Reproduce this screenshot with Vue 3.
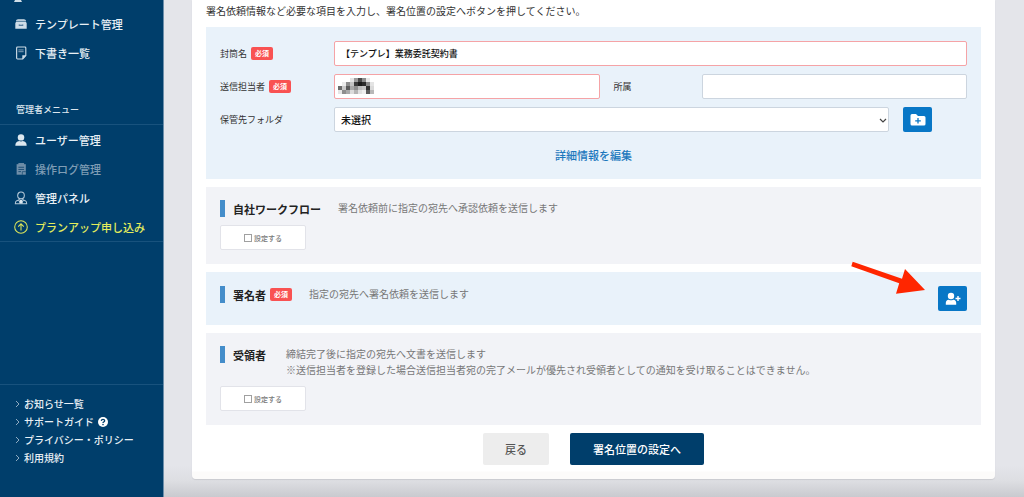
<script setup>
import { ref } from 'vue'

const envelope = ref('【テンプレ】業務委託契約書')
const sender = ref('')
const department = ref('')
const folder = ref('未選択')
const workflow = ref(false)
const receiver = ref(false)

const footerLinks = [
  { text: 'お知らせ一覧' },
  { text: 'サポートガイド', help: true },
  { text: 'プライバシー・ポリシー' },
  { text: '利用規約' },
]

const shades = [
  ['', '', '', '#e3e3e3', '#9a9a9a', '#4a4a4a', '#8e8e8e', '#e8e8e8', ''],
  ['', '#ececec', '#8c8c8c', '#c2c2c2', '#3a3a3a', '#1c1c1c', '#2c2c2c', '#8a8a8a', '#e4e4e4'],
  ['#6c6c6c', '#c9c9c9', '#5a5a5a', '#a8a8a8', '#8e8e8e', '#bdbdbd', '#c8c8c8', '#333333', '#dadada'],
  ['#e6e6e6', '#8e8e8e', '#a9a9a9', '#dcdcdc', '#b5b5b5', '#e2e2e2', '#f0f0f0', '#5c5c5c', '#b8b8b8'],
]
</script>

<template>
  <div class="page">
    <aside class="sidebar">
      <svg class="cut" viewBox="0 0 8 2"><path d="M1 0h6l1 2H0z" fill="#cfdde8" /></svg>
      <nav class="menu first">
        <a href="#">
          <svg viewBox="0 0 16 16"><path d="M4.500 2.500h7l2 1v1h-11v-1zM2.500 5h11l1 2v6.500h-13V7z" fill="#cfdde8" /><path d="M6 8.500v1h4v-1" fill="none" stroke="#335f85" stroke-width="1.200" /><path d="M3 4.700h10" stroke="#557f9f" stroke-width=".6" /></svg>
          テンプレート管理
        </a>
        <a href="#">
          <svg viewBox="0 0 16 16"><path d="M4 1.200h8.500q1 0 1 1V11l-3.500 3.800H4q-1 0-1-1V2.200q0-1 1-1z" fill="none" stroke="#cfdde8" stroke-width="1.300" /><path d="M9.500 15v-4.500H14z" fill="#cfdde8" /><path d="M5 4.500h6M5 6.500h6" stroke="#a5bccd" stroke-width=".9" /></svg>
          下書き一覧
        </a>
      </nav>
      <h2>管理者メニュー</h2>
      <nav class="menu second">
        <a href="#">
          <svg viewBox="0 0 16 16"><circle cx="8" cy="5" r="3.700" fill="#dce7ef" /><path d="M1.500 14.500q0-5 4.500-5.500l2 .7 2-.7q4.500 .5 4.500 5.500z" fill="#dce7ef" /></svg>
          ユーザー管理
        </a>
        <a href="#" class="dim">
          <svg viewBox="0 0 16 16"><path d="M3 2.500h10.500v12H3z" fill="#708fa9" /><path d="M5 1.200h6.500v2H5z" fill="#708fa9" /><path d="M5 6h6.500M5 8.500h6.500M5 11h3" stroke="#14476f" /><path d="M9.500 14.500v-3.500h4" fill="none" stroke="#14476f" stroke-width=".8" /></svg>
          操作ログ管理
        </a>
        <a href="#">
          <svg viewBox="0 0 16 16"><g fill="none" stroke="#b5c9d8" stroke-width="1.200"><circle cx="8" cy="5" r="3.800" /><path d="M6 8.500v1.500l-3.300 1.300q-1.200.7-1.200 3.200h13q0-2.500-1.200-3.200L10 10V8.500M5.500 10.500l1.500 3 1-2 1 2 1.500-3" /></g><path d="M7 10h2l.7 4H6.300z" fill="#dce7ef" /></svg>
          管理パネル
        </a>
        <a href="#" class="plan">
          <svg viewBox="0 0 16 16"><g fill="none" stroke="#dce65a" stroke-width="1.200"><circle cx="8" cy="8" r="7.200" /><path d="M8 12V4.500M4.800 7.500L8 4.300l3.200 3.200" /></g></svg>
          プランアップ申し込み
        </a>
      </nav>
      <nav class="links">
        <a v-for="link in footerLinks" :key="link.text" href="#">
          <svg class="caret" viewBox="0 0 5 8"><path d="M1 1l3 3-3 3" fill="none" stroke="#8fabc1" /></svg>
          {{ link.text }}
          <svg v-if="link.help" class="help" viewBox="0 0 10 10"><circle cx="5" cy="5" r="5" fill="#fff" /><path d="M3.300 3.900Q3.400 2.300 5 2.300T6.700 3.700Q6.700 4.500 5.800 4.900 5 5.200 5 6" fill="none" stroke="#003e6b" stroke-width="1.300" /><circle cx="5" cy="7.600" r=".8" fill="#003e6b" /></svg>
        </a>
      </nav>
    </aside>

    <main>
      <form class="card" @submit.prevent>
        <p class="intro">署名依頼情報など必要な項目を入力し、署名位置の設定へボタンを押してください。</p>

        <section class="panel blue">
          <div class="row">
            <label for="envelope">封筒名<span class="badge">必須</span></label>
            <input id="envelope" v-model="envelope" class="field required" type="text">
          </div>
          <div class="row split">
            <label for="sender">送信担当者<span class="badge">必須</span></label>
            <div class="masked">
              <input id="sender" v-model="sender" class="field required" type="text">
              <svg class="mosaic" viewBox="0 0 36 16" shape-rendering="crispEdges">
                <template v-for="(line, y) in shades" :key="y">
                  <rect v-for="(shade, x) in line" :key="x" :x="x * 4" :y="y * 4" width="4" height="4" :fill="shade || '#fff'" />
                </template>
              </svg>
            </div>
            <label for="department" class="middle">所属</label>
            <input id="department" v-model="department" class="field" type="text">
          </div>
          <div class="row folder">
            <label for="folder">保管先フォルダ</label>
            <select id="folder" v-model="folder" class="field">
              <option>未選択</option>
            </select>
            <svg class="arrowdown" viewBox="0 0 8 5"><path d="M1 1l3 3 3-3" fill="none" stroke="#444" stroke-width="1.200" /></svg>
            <button type="button" class="icon" aria-label="フォルダ追加">
              <svg viewBox="0 0 16 14"><path d="M2 1h4l2 2h6q1.500 0 1.500 1.500v6.500q0 1.500-1.500 1.500H2Q.5 12.500.5 11V2.500Q.5 1 2 1z" fill="#fff" /><path d="M8 5v5.600M5.200 7.800h5.600" stroke="#0877c6" stroke-width="1.300" /></svg>
            </button>
          </div>
          <a href="#" class="detail">詳細情報を編集</a>
        </section>

        <section class="panel">
          <div class="head">
            <h3>自社ワークフロー</h3>
            <p>署名依頼前に指定の宛先へ承認依頼を送信します</p>
          </div>
          <label class="toggle"><input v-model="workflow" type="checkbox">設定する</label>
        </section>

        <section class="panel blue signer">
          <div class="head">
            <h3>署名者<span class="badge">必須</span></h3>
            <p>指定の宛先へ署名依頼を送信します</p>
          </div>
          <button type="button" class="icon" aria-label="署名者追加">
            <svg viewBox="0 0 16 14"><circle cx="6" cy="4" r="3.200" fill="#fff" /><path d="M.8 12.800V11q0-3 3-3.200Q6 8.800 8.200 7.800q3 .2 3 3.200v1.800z" fill="#fff" /><path d="M13 4v5M10.500 6.500h5" stroke="#fff" stroke-width="1.400" /></svg>
          </button>
          <svg class="pointer" viewBox="0 0 76 36"><path d="M2.700 1.700L52 18.800 55 9l20 21-29 3.700 3.200-10.500L1.300 6.200z" fill="#ff2600" /></svg>
        </section>

        <section class="panel">
          <div class="head">
            <h3>受領者</h3>
            <p>締結完了後に指定の宛先へ文書を送信します<br>※送信担当者を登録した場合送信担当者宛の完了メールが優先され受領者としての通知を受け取ることはできません。</p>
          </div>
          <label class="toggle"><input v-model="receiver" type="checkbox">設定する</label>
        </section>

        <div class="actions">
          <button type="button" class="back">戻る</button>
          <button type="submit" class="next">署名位置の設定へ</button>
        </div>
      </form>
    </main>
  </div>
</template>

<style>
body {
  margin: 0;
}
</style>

<style scoped>
* {
  box-sizing: border-box;
}

.page {
  display: flex;
  min-height: 100vh;
  background: linear-gradient(to top, #c9cacf, #dddee2 16px, #e4e5ea 32px);
  font-family: "Noto Sans CJK JP", sans-serif;
  font-size: 10px;
  line-height: 16px;
  color: #333;
}

a {
  text-decoration: none;
}

h2,
h3,
p {
  margin: 0;
}

button,
input,
select {
  font-family: inherit;
}

.sidebar {
  display: flex;
  flex-direction: column;
  flex: none;
  width: 164px;
  background: #003e6b;
  border-right: 1px solid #6d8fab;
}

.cut {
  display: block;
  width: 8px;
  height: 2px;
  margin-left: 14px;
}

.menu {
  display: flex;
  flex-direction: column;
}

.menu a {
  display: flex;
  align-items: center;
  gap: 7px;
  height: 29px;
  padding-left: 14px;
  font-size: 11px;
  font-weight: 500;
  color: #e9f0f5;
}

.menu svg {
  width: 14px;
  height: 14px;
}

.menu.first {
  padding-top: 7px;
}

h2 {
  padding: 35px 16px 6px;
  font-size: 9px;
  font-weight: 500;
  color: #dce6ee;
}

.menu.second {
  border-top: 1px solid #18527d;
  border-bottom: 1px solid #18527d;
}

.menu .dim {
  color: #7f9db5;
}

.menu .plan {
  color: #e3ec5c;
}

.links {
  display: flex;
  flex-direction: column;
  margin-top: auto;
  padding: 10px 15px 30px;
  border-top: 1px solid #18527d;
}

.links a {
  display: flex;
  align-items: center;
  gap: 4px;
  height: 18px;
  font-weight: 500;
  color: #e9f0f5;
}

.caret {
  width: 5px;
  height: 8px;
}

.help {
  width: 10px;
  height: 10px;
}

main {
  flex: 1;
  min-width: 0;
  padding: 0 29px 18px 28px;
}

.card {
  display: flex;
  flex-direction: column;
  gap: 8px;
  padding: 3px 14px 14px;
  background: linear-gradient(to top, #fcfbfa 7px, #fff 8px);
  border-radius: 0 0 4px 4px;
  box-shadow: 0 1px 1px #cacbd0;
}

.panel {
  padding: 13px 14px 14px;
  background: #f2f3f7;
}

.blue {
  padding-top: 14px;
  background: #e9f2fa;
}

.row {
  display: grid;
  grid-template-columns: 114px 1fr;
  align-items: center;
  margin-bottom: 8px;
}

.split {
  grid-template-columns: 114px 1fr 102px 1fr;
}

.folder {
  position: relative;
  grid-template-columns: 114px 1fr 43px;
  padding-right: 35px;
  margin-bottom: 13px;
}

.row label {
  display: flex;
  align-items: center;
  font-size: 9px;
}

.row .middle {
  padding-left: 14px;
}

.badge {
  margin-left: 4px;
  padding: 0 4px;
  border-radius: 2px;
  background: #f95252;
  color: #fff;
  font-size: 7px;
  font-weight: 700;
  line-height: 13px;
}

.field {
  display: block;
  width: 100%;
  min-width: 0;
  height: 25px;
  padding: 0 6px;
  border: 1px solid #ccd5df;
  border-radius: 2px;
  background: #fff;
  color: #111;
  font-size: 10px;
  font-weight: 500;
  appearance: none;
}

.required {
  border-color: #f5a3a6;
  font-size: 9px;
}

.masked {
  position: relative;
}

.mosaic {
  position: absolute;
  top: 4px;
  left: 4px;
  width: 36px;
  height: 16px;
}

.arrowdown {
  position: absolute;
  top: 11px;
  right: 37px;
  width: 8px;
  height: 5px;
  margin-right: 43px;
}

.icon {
  display: grid;
  place-items: center;
  flex: none;
  width: 29px;
  height: 25px;
  padding: 0;
  border: 0;
  border-radius: 2px;
  background: #0877c6;
}

.icon svg {
  width: 16px;
  height: 14px;
}

.folder .icon {
  justify-self: end;
}

.detail {
  display: block;
  width: fit-content;
  margin: 0 auto;
  color: #1c78bd;
  font-size: 11px;
  font-weight: 500;
  line-height: 20px;
}

.head {
  display: flex;
  gap: 17px;
}

h3 {
  display: flex;
  align-items: center;
  height: 17px;
  min-width: 49px;
  padding-left: 8px;
  border-left: 5px solid #448dca;
  color: #222;
  font-size: 11px;
  font-weight: 700;
}

.head p {
  color: #777;
}

.signer {
  position: relative;
  display: flex;
  justify-content: space-between;
}

.pointer {
  position: absolute;
  top: -12px;
  right: 55px;
  width: 76px;
  height: 36px;
}

.toggle {
  display: flex;
  align-items: center;
  justify-content: center;
  gap: 2px;
  width: 86px;
  height: 25px;
  margin-top: 8px;
  border: 1px solid #e2e3e9;
  border-radius: 2px;
  background: #fff;
  color: #777;
  font-size: 7px;
  font-weight: 500;
}

.toggle input {
  width: 8px;
  height: 8px;
  margin: 0;
  border: 1px solid #a0a0a0;
  background: #fff;
  appearance: none;
}

.toggle input:checked {
  background: #0877c6;
}

.actions {
  display: flex;
  justify-content: center;
  gap: 21px;
}

.actions button {
  height: 32px;
  padding: 0 22px;
  border: 0;
  border-radius: 2px;
  font-size: 11px;
  font-weight: 500;
}

.actions .back {
  background: #ededed;
  color: #555;
}

.actions .next {
  padding: 0 23px;
  background: #003e6b;
  color: #fff;
}
</style>
